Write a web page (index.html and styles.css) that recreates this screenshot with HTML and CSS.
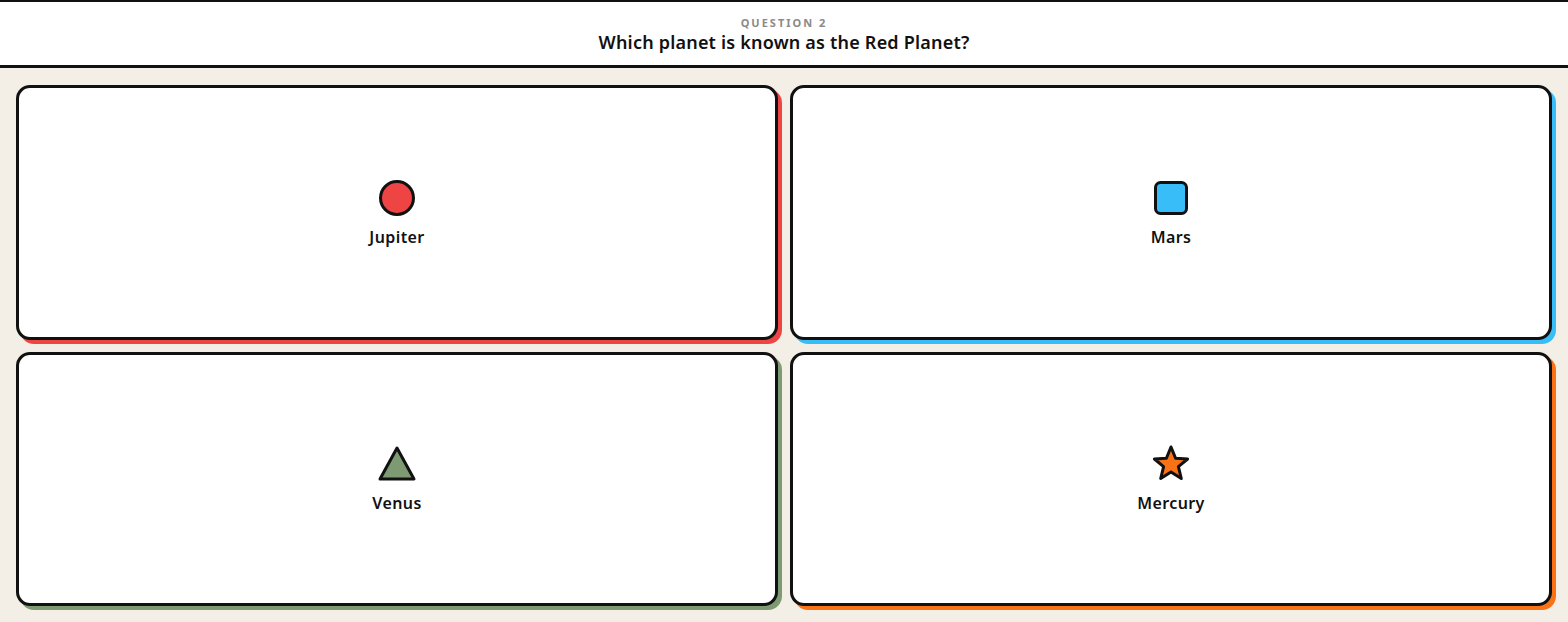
FILE: index.html
```html
<!DOCTYPE html>
<html>
<head lang="en">
  <meta charset="UTF-8">
  <title>Quiz</title>
  <link rel="stylesheet" href="styles.css">
</head>
<body>

<div class="quiz">
  <!-- 题目栏 -->
  <header class="question">
    <p class="question-num">QUESTION 2</p>
    <h1 class="question-text">Which planet is known as the Red Planet?</h1>
  </header>

  <!-- 四个答案 -->
  <main class="answers">
    <div class="answer answer-red">
      <svg class="shape" width="40" height="40" viewBox="0 0 40 40">
        <circle cx="20" cy="20" r="16.5" fill="#ef4444" stroke="#111" stroke-width="3"/>
      </svg>
      <span class="label">Jupiter</span>
    </div>
    <div class="answer answer-blue">
      <svg class="shape" width="40" height="40" viewBox="0 0 40 40">
        <rect x="4.5" y="4.5" width="31" height="31" rx="5" fill="#38bdf8" stroke="#111" stroke-width="3"/>
      </svg>
      <span class="label">Mars</span>
    </div>
    <div class="answer answer-green">
      <svg class="shape" width="40" height="40" viewBox="0 0 40 40">
        <path d="M20 4 L37 35 L3 35 Z" fill="#7d9a72" stroke="#111" stroke-width="3" stroke-linejoin="round"/>
      </svg>
      <span class="label">Venus</span>
    </div>
    <div class="answer answer-orange">
      <svg class="shape" width="40" height="40" viewBox="0 0 40 40">
        <path d="M20 3 L24.6 14.2 L36.6 15 L27.4 22.7 L30.3 34.5 L20 28 L9.7 34.5 L12.6 22.7 L3.4 15 L15.4 14.2 Z" fill="#f97316" stroke="#111" stroke-width="3" stroke-linejoin="round"/>
      </svg>
      <span class="label">Mercury</span>
    </div>
  </main>
</div>

</body>
</html>
```

FILE: styles.css
```css
* {
  margin: 0;
  padding: 0;
  box-sizing: border-box;
}

body, html {
  width: 100%;
  height: 100%;
}

body {
  background: #f3efe7;
  font-family: "Noto Sans", "Open Sans", sans-serif;
  color: #111;
}

.quiz {
  height: 100%;
  display: flex;
  flex-direction: column;
}

/* 顶部题目 */
.question {
  height: 68px;
  background: #fff;
  border-top: 2px solid #111;
  border-bottom: 3px solid #111;
  display: flex;
  flex-direction: column;
  align-items: center;
  justify-content: center;
  gap: 1px;
  padding-top: 2px;
}

.question-num {
  font-size: 11px;
  line-height: 14px;
  font-weight: 700;
  letter-spacing: 2px;
  color: #8a8a8a;
}

.question-text {
  font-size: 18px;
  font-weight: 600;
  line-height: 22px;
  letter-spacing: 0.2px;
}

/* 答案格子 */
.answers {
  flex: 1;
  display: grid;
  grid-template-columns: 1fr 1fr;
  grid-template-rows: 1fr 1fr;
  gap: 12px;
  padding: 17px 16px 16px 16px;
}

.answer {
  background: #fff;
  border: 3px solid #111;
  border-radius: 14px;
  display: flex;
  flex-direction: column;
  align-items: center;
  justify-content: center;
  gap: 9px;
  cursor: pointer;
}

.answer-red {
  box-shadow: 4px 4px 0 #ef4444;
}

.answer-blue {
  box-shadow: 4px 4px 0 #38bdf8;
}

.answer-green {
  box-shadow: 4px 4px 0 #7d9a72;
}

.answer-orange {
  box-shadow: 4px 4px 0 #f97316;
}

.shape {
  display: block;
}

.label {
  font-size: 16px;
  font-weight: 600;
  line-height: 20px;
  letter-spacing: 0.4px;
}
```
